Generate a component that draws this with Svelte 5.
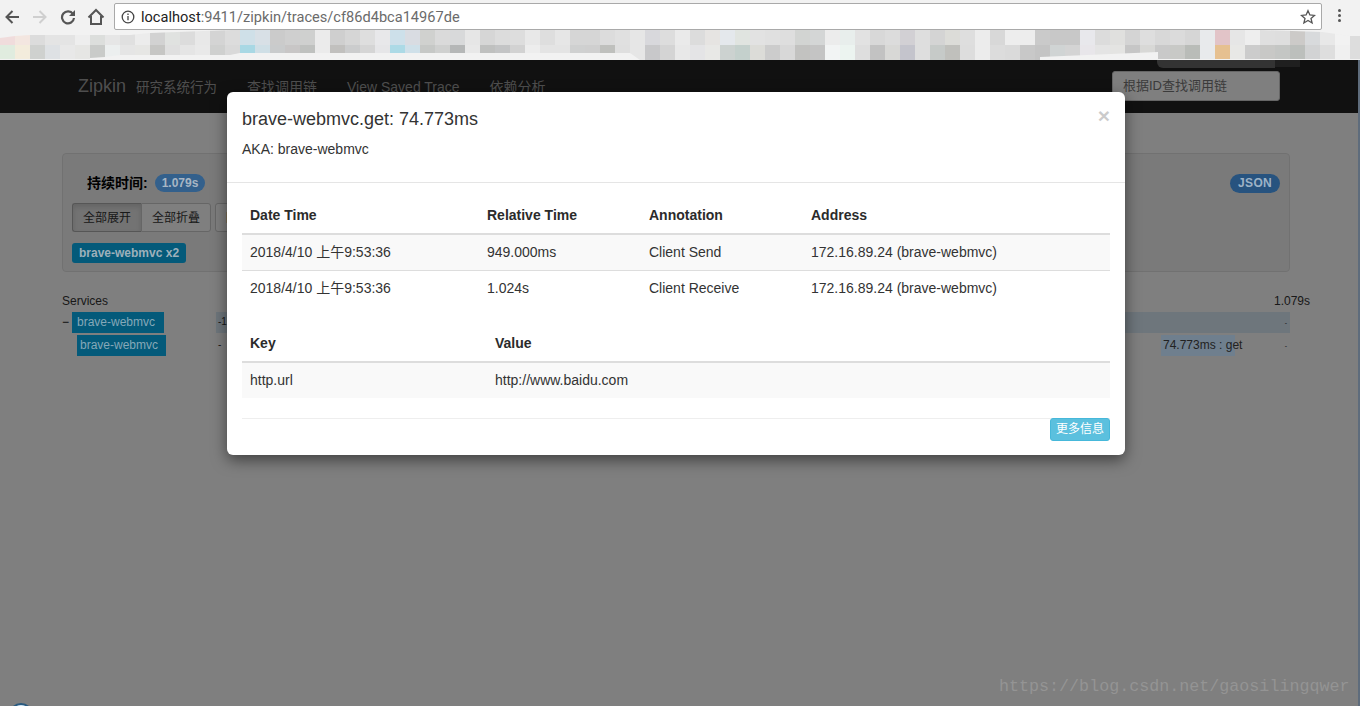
<script>
  const topRow = ['#f0dcdc','#f3e6e0','#dcdcdc','#e4e4e4','#e4e4e4','#eeeeee','#dcdedc','#e6e6e6','#e0e0e0','#ececec','#d2d2d2','#e0e2e0','#dcdcdc','#e8e8e8','#d4d4d4','#dcdcdc','#cfe0e8','#d8e0e6','#cbcbcb','#cfcfcf','#cfd0cf','#ebebeb','#cfcfcf','#d6d6d6','#dedede','#e8e8ea','#cde0ea','#d9dce2','#d0d1cf','#dadada','#d8d9da','#e6e6e6','#d6d6d6','#dcdcdc','#dddddd','#e8e8e8','#dedede','#e6e6e6','#d6d6d6','#d6d6d6','#dcdcdc','#e0e0e0','#e6e6e6','#d8d8dc','#dddddd',
    '#eaeaea','#dcdcdc','#e6e4e2','#e4e8ec','#e0e4e0','#e2e2e2','#e0e0e0','#dedede','#d2d4d2','#d4d6d6','#ececec','#e8eeec','#e2e2e2','#d8d8d8','#dcdcdc','#d2d0d4','#dedede','#d4d4d4','#dcdcd8','#dedede','#ececec','#d8d8d8','#ededed','#ededed','#cacaca','#c8c8c8','#c8c8c8','#e8e8ec','#dcdcdc','#e0e0de','#d4d4d4','#dedede','#d8d8d8','#dbdbdb','#d6d6d6','#e8eaec','#e2c4c8','#e6e6e6','#eeeeee','#dfdfdf','#dedede','#cccac8','#d8dadc','#e8e8e8','#f2f2f2','#dddddd'];
  const lowRow = ['#e0ecdf','#f3ecdc','#cfd1cf','#dee1e4','#e8e8e8','#e6e6e4','#c9cbc9','#ecefef','#e5e5e5','#e6e6e4','#c6c6c4','#dfdfdf','#e5e5e5','#e9e9e9','#cfd0cf','#d9d9d9','#a8d8e4','#cfdfe6','#c9cbcc','#c8c6c6','#bfc1bf','#ebebeb','#c1c0be','#cbcccd','#d5d5d5','#e6e6e8','#acdae6','#cfe0e9','#c6c8c6','#cfd0cf','#b5b7b7','#e8e8e8','#bfc0bf','#c3c4c5','#d2d2d2','#ededed','#e4e4e4','#e4e4e4','#cfd0d0','#cfcfcf','#bfc0bd','#dfdfdf','#e6e6e6','#c8c8ca','#d4d4d4',
    '#e8e8e8','#e4e4e6','#e8e8e6','#ccd2d0','#c4d0cc','#dcdcd8','#cccccc','#d8d8d8','#c2c2c0','#c4c4c4','#f2f4f4','#ecf4f0','#dedede','#c2c2c2','#d8d8d6','#c4c4cc','#dedede','#c6cac8','#c0c0bc','#dddddd','#ececec','#dcdcdc','#dadada','#c8c8c8','#c4c4c4','#d0d4d4','#d4d4d4','#e8e6ea','#e4e4e4','#e4e4e2','#c6c6c6','#d8d8d6','#c9c9c9','#c8c9c6','#b9bcb8','#e8eaec','#e6c090','#e8e8e6','#cccccc','#c8c8c6','#c4c6c4','#bcbfbc','#d2d3d4','#dedede','#f0f0f0','#dddddd'];
  const rows = [topRow, lowRow];
  const navLinks = ['查找调用链', 'View Saved Trace', '依赖分析'];
  const annotations = [
    { date: '2018/4/10 上午9:53:36', rel: '949.000ms', ann: 'Client Send', addr: '172.16.89.24 (brave-webmvc)' },
    { date: '2018/4/10 上午9:53:36', rel: '1.024s', ann: 'Client Receive', addr: '172.16.89.24 (brave-webmvc)' }
  ];
</script>

<div class="page">
  <header class="chrome">
    <button class="nav-btn" aria-label="Back">
      <svg width="16" height="16" viewBox="0 0 16 16"><path d="M15 8H3M8.500 2 2.500 8l6 6" fill="none" stroke="#555" stroke-width="2"/></svg>
    </button>
    <button class="nav-btn" aria-label="Forward">
      <svg width="16" height="16" viewBox="0 0 16 16"><path d="M1 8h12M7.500 2l6 6-6 6" fill="none" stroke="#cfcfcf" stroke-width="2"/></svg>
    </button>
    <button class="nav-btn" aria-label="Reload">
      <svg width="16" height="16" viewBox="0 0 16 16"><path d="M13 5A6 6 0 1 0 14 9" fill="none" stroke="#555" stroke-width="2.200"/><path d="M15 1v6H9z" fill="#555"/></svg>
    </button>
    <button class="nav-btn" aria-label="Home">
      <svg width="18" height="18" viewBox="0 0 18 18"><path d="M1.500 9.500 9 2l7.500 7.500M4 8v8h10V8" fill="none" stroke="#555" stroke-width="2"/></svg>
    </button>
    <div class="omnibox">
      <svg class="info" width="14" height="14" viewBox="0 0 14 14"><circle cx="7" cy="7" r="5.800" fill="none" stroke="#444" stroke-width="1.300"/><path d="M7 6v4.200M7 3.600v1.300" stroke="#444" stroke-width="1.300"/></svg>
      <span class="url"><span class="host">localhost</span>:9411/zipkin/traces/cf86d4bca14967de</span>
      <svg class="star" width="16" height="16" viewBox="0 0 16 16"><path d="m8 1.700 1.900 4.300 4.600.4-3.500 3 1.100 4.600L8 11.500 3.900 14l1.100-4.600-3.500-3 4.600-.4z" fill="none" stroke="#555" stroke-width="1.300"/></svg>
    </div>
    <div class="kebab"><i></i><i></i><i></i></div>
  </header>

  <div class="mosaic">
    <div class="mosaic-clip">
      {#each rows as row}
        <div class="mosaic-row">
          {#each row as c}<span style:background={c}></span>{/each}
        </div>
      {/each}
    </div>
  </div>

  <div class="app">
    <nav class="navbar">
      <span class="brand">Zipkin</span>
      <span class="tagline">研究系统行为</span>
      <div class="links">
        {#each navLinks as l}<span>{l}</span>{/each}
      </div>
      <div class="search">根据ID查找调用链</div>
    </nav>

    <main class="content">
      <section class="well">
        <div class="well-top">
          <div class="duration"><b>持续时间:</b><span class="badge">1.079s</span></div>
          <span class="badge json">JSON</span>
        </div>
        <div class="btn-row">
          <div class="group">
            <span class="btn active">全部展开</span><span class="btn">全部折叠</span>
          </div>
          <span class="btn solo">隐</span>
        </div>
        <span class="svc-label">brave-webmvc x2</span>
      </section>

      <div class="trace-head"><span>Services</span><span>1.079s</span></div>

      <div class="trace-row first">
        <span class="toggle">−</span><span class="svc">brave-webmvc</span>
        <div class="timeline full"><span class="left">-1</span><span class="dot">-</span></div>
      </div>
      <div class="trace-row second">
        <span class="svc">brave-webmvc</span>
        <div class="timeline"><span class="left">-</span><span class="span-bar"></span><span class="span-text">74.773ms : get</span><span class="dot">-</span></div>
      </div>
    </main>
  </div>

  <div class="backdrop"></div>
  <div class="edge"></div>
  <div class="smudge"></div>
  <div class="smudge dark"></div>

  <div class="modal">
    <div class="modal-head">
      <span class="close">×</span>
      <h4>brave-webmvc.get: 74.773ms</h4>
      <p>AKA: brave-webmvc</p>
    </div>
    <div class="modal-body">
      <table class="ann">
        <thead><tr><th>Date Time</th><th>Relative Time</th><th>Annotation</th><th>Address</th></tr></thead>
        <tbody>
          {#each annotations as a}
            <tr><td>{a.date}</td><td>{a.rel}</td><td>{a.ann}</td><td>{a.addr}</td></tr>
          {/each}
        </tbody>
      </table>
      <table class="kv">
        <thead><tr><th>Key</th><th>Value</th></tr></thead>
        <tbody><tr><td>http.url</td><td>http://www.baidu.com</td></tr></tbody>
      </table>
      <div class="foot"><span class="more">更多信息</span></div>
    </div>
  </div>

  <div class="watermark">https://blog.csdn.net/gaosilingqwer</div>
  <div class="chat-bubble"></div>
</div>

<style>
  :global(body) { margin: 0; background: #fff; }
  .page {
    position: relative; width: 1360px; height: 706px; overflow: hidden;
    font-family: "Liberation Sans", "Noto Sans CJK SC", sans-serif;
    font-size: 14px; line-height: 20px; color: #333;
  }
  .chrome { height: 30px; background: #f2f2f2; display: flex; align-items: center; box-sizing: border-box; padding: 3px 0 0 0; margin-left: -2px; }
  .nav-btn { width: 28px; height: 24px; padding: 0; border: 0; background: none; display: flex; align-items: center; justify-content: center; flex: none; }
  .omnibox {
    margin-left: 4px; width: 1208px; height: 27px; box-sizing: border-box; flex: none;
    background: #fff; border: 1px solid #a9a9a9; border-radius: 2px; display: flex; align-items: center; padding: 0 5px 0 6px;
  }
  .url { margin-left: 6px; font-size: 14.600px; color: #6b6b6b; font-family: "Roboto", "Liberation Sans", sans-serif; flex: 1; }
  .host { color: #222; }
  .kebab { margin-left: 16px; display: flex; flex-direction: column; gap: 2px; margin-top: -2px; }
  .kebab i { width: 3px; height: 3px; border-radius: 50%; background: #555; display: block; }

  .mosaic { height: 30px; background: #f2f2f2; }
  .mosaic-clip {
    height: 30px; width: 1360px; overflow: hidden;
    clip-path: polygon(0 8px, 15px 6px, 30px 5px, 130px 5px, 150px 3px, 232px 0, 1260px 0, 1322px 2px, 1350px 6px, 1360px 6px, 1360px 29px, 1158px 29px, 1158px 22px, 1040px 27px, 1040px 30px, 640px 30px, 630px 23px, 240px 23px, 230px 25px, 120px 25px, 105px 27px, 90px 28px, 90px 29px, 0 29px);
  }
  .mosaic-row { display: flex; height: 15px; }
  .mosaic-row span { flex: none; width: 15px; }

  .navbar { height: 53px; background: #222; display: flex; align-items: center; padding-left: 78px; color: #9d9d9d; box-sizing: border-box; padding-bottom: 1px; }
  .brand { font-size: 18px; }
  .tagline { margin-left: 10px; font-size: 13.500px; padding-top: 3px; }
  .links { display: flex; margin-left: 30px; gap: 30px; font-size: 14px; padding-top: 2px; }
  .search {
    margin-left: auto; margin-right: 80px; width: 168px; height: 30px; box-sizing: border-box;
    background: #fff; border: 1px solid #ccc; border-radius: 3px; padding: 4px 10px; font-size: 13px; color: #777;
  }
  .content { padding: 40px 50px 0 62px; }
  .well {
    width: 1228px; height: 119px; box-sizing: border-box; background: #f5f5f5;
    border: 1px solid #e3e3e3; border-radius: 4px; padding: 19px 9px 0;
    margin-bottom: 21px; display: flex; flex-direction: column; align-items: flex-start;
  }
  .well-top { display: flex; justify-content: space-between; align-items: center; width: 1208px; height: 20px; }
  .duration { display: flex; align-items: center; gap: 7px; padding-left: 15px; color: #000; font-size: 14px; }
  .badge { position: relative; z-index: 2; background: #33608c; color: #a8b6c4; font-weight: 700; font-size: 12px; border-radius: 10px; padding: 0 7px; line-height: 18px; }
  .badge.json { background: #27537f; color: #9db2c6; padding: 0 8px; line-height: 19px; letter-spacing: .3px; }
  .btn-row { display: flex; margin-top: 10px; gap: 4px; }
  .group { display: flex; }
  .btn { height: 29px; box-sizing: border-box; background: #fff; border: 1px solid #ccc; font-size: 12px; padding: 4px 10px; }
  .group .btn:first-child { border-radius: 3px 0 0 3px; border-right: 0; }
  .group .btn:last-child { border-radius: 0 3px 3px 0; }
  .btn.active { background: #e6e6e6; box-shadow: inset 0 3px 5px rgba(0,0,0,.125); border-color: #adadad; }
  .btn.solo { border-radius: 3px; width: 40px; }
  .svc-label { position: relative; z-index: 2; margin-top: 11px; background: #045a7a; color: #9db0ba; font-weight: 700; font-size: 12px; line-height: 20px; border-radius: 3px; padding: 0 7px; }
  .trace-head { display: flex; justify-content: space-between; width: 1248px; font-size: 12px; line-height: 16px; margin-bottom: 3px; }
  .trace-row { display: flex; width: 1228px; height: 21px; align-items: stretch; font-size: 12px; margin-bottom: 2px; }
  .toggle { width: 10px; color: #000; line-height: 20px; }
  .svc { position: relative; z-index: 2; background: #045a7a; color: #86a8b8; line-height: 20px; width: 92px; box-sizing: border-box; padding-left: 5px; flex: none; }
  .second { padding-left: 15px; width: 1213px; }
  .second .svc { width: 89px; padding-left: 3px; }
  .timeline { position: relative; flex: 1; margin-left: 52px; }
  .full { background: #dcecf8; }
  .left { position: absolute; left: 2px; top: 0; font-size: 10px; }
  .second .left { left: 0; }
  .dot { position: absolute; right: 3px; top: 1px; font-size: 7px; }
  .span-bar { position: absolute; z-index: 2; left: 943px; width: 74px; top: 0; bottom: 0; background: #6f7f8e; }
  .span-text { position: absolute; z-index: 2; left: 945px; top: 0; line-height: 20px; white-space: nowrap; color: #222; }

  .backdrop { position: absolute; z-index: 1; inset: 60px 0 0 0; background: rgba(0,0,0,.5); }
  .edge { position: absolute; z-index: 2; top: 60px; right: 0; bottom: 0; width: 2px; background: #5e6c7c; }
  .smudge { position: absolute; z-index: 2; left: 1157px; top: 60px; width: 118px; height: 8px; background: #333; border-radius: 0 0 0 6px; }
  .smudge.dark { left: 1275px; width: 25px; height: 7px; background: #1f1f1f; border-radius: 0; }
  .modal {
    position: absolute; z-index: 3; left: 227px; top: 92px; width: 898px; height: 363px; background: #fff;
    border-radius: 6px; box-shadow: 0 5px 15px rgba(0,0,0,.5); box-sizing: border-box; overflow: hidden;
  }
  .modal-head { height: 91px; box-sizing: border-box; padding: 17px 15px 0; border-bottom: 1px solid #e5e5e5; }
  .close { float: right; font-size: 21px; font-weight: 700; color: #000; opacity: .2; line-height: 18px; margin-top: -2px; }
  h4 { margin: 0; font-size: 18px; font-weight: 500; line-height: 20px; color: #333; }
  .modal-head p { margin: 10px 0 0; }
  .modal-body { padding: 15px 15px 0; }
  table { width: 868px; border-collapse: collapse; table-layout: fixed; }
  th { text-align: left; padding: 7px 8px 8px; height: 20px; border-bottom: 2px solid #ddd; font-weight: 700; color: #2b2b2b; box-sizing: content-box; }
  td { padding: 7px 8px 8px; height: 20px; border-top: 1px solid #ddd; box-sizing: content-box; }
  thead + tbody tr:first-child td { border-top: 0; }
  tbody tr:nth-child(odd) { background: #f9f9f9; }
  .ann th:nth-child(1) { width: 221px; }
  .ann th:nth-child(2) { width: 146px; }
  .ann th:nth-child(3) { width: 146px; }
  .kv { margin-top: 20px; }
  .kv th:nth-child(1) { width: 229px; }
  .foot { margin-top: 20px; border-top: 1px solid #eee; display: flex; justify-content: flex-end; }
  .more { background: #5bc0de; color: #fff; font-size: 12px; line-height: 18px; border-radius: 3px; padding: 1px 5px 2px; border: 1px solid #46b8da; margin-top: -1px; }

  .watermark { position: absolute; z-index: 3; left: 999px; top: 677px; font-family: "Liberation Mono", monospace; font-size: 16.700px; color: #949494; line-height: 20px; white-space: nowrap; }
  .chat-bubble { position: absolute; z-index: 2; left: 9px; top: 703px; width: 24px; height: 24px; border-radius: 50%; background: #cfe3f2; border: 2px solid #2a5a7f; box-sizing: border-box; }
</style>
